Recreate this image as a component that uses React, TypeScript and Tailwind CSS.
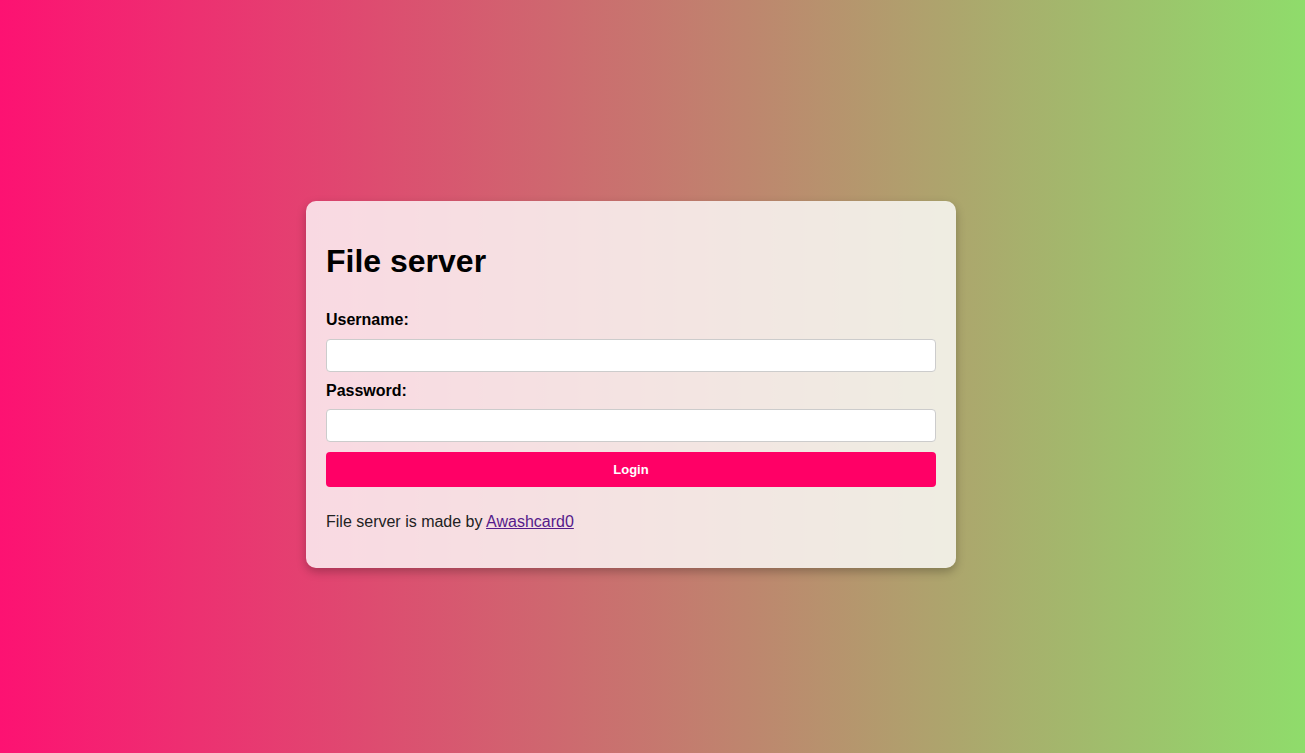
export default function App() {
  return (
    <div className="min-h-screen w-full bg-[linear-gradient(to_right,#fd1272,#8fdc6b)] flex items-center justify-center pr-[43px] pt-[16px] font-['Liberation_Sans',Arial,sans-serif]">
      <div className="w-[650px] bg-white/80 rounded-[10px] shadow-[0_4px_10px_rgba(0,0,0,0.25)] p-5">
        <h1 className="text-[32px] leading-[37px] font-bold text-black my-[21.44px]">File server</h1>
        <form onSubmit={(e) => e.preventDefault()} className="flex flex-col">
          <label htmlFor="username" className="block text-base leading-[18.4px] font-bold text-black mt-[10px] mb-[9px]">
            Username:
          </label>
          <input
            id="username"
            type="text"
            className="block w-full h-[33px] px-2 bg-white border border-[#ccc] rounded-[4px] text-base outline-none"
          />
          <label htmlFor="password" className="block text-base leading-[18.4px] font-bold text-black mt-[10px] mb-[9px]">
            Password:
          </label>
          <input
            id="password"
            type="password"
            className="block w-full h-[33px] px-2 bg-white border border-[#ccc] rounded-[4px] text-base outline-none"
          />
          <button
            type="submit"
            className="block w-full h-[35px] mt-[10px] mb-[10px] bg-[#ff0066] text-white text-[13px] font-bold rounded-[4px]"
          >
            Login
          </button>
        </form>
        <p className="text-base leading-[18.4px] text-[#222] my-4">
          File server is made by{" "}
          <a href="#" className="text-[#551a8b] underline">
            Awashcard0
          </a>
        </p>
      </div>
    </div>
  );
}
